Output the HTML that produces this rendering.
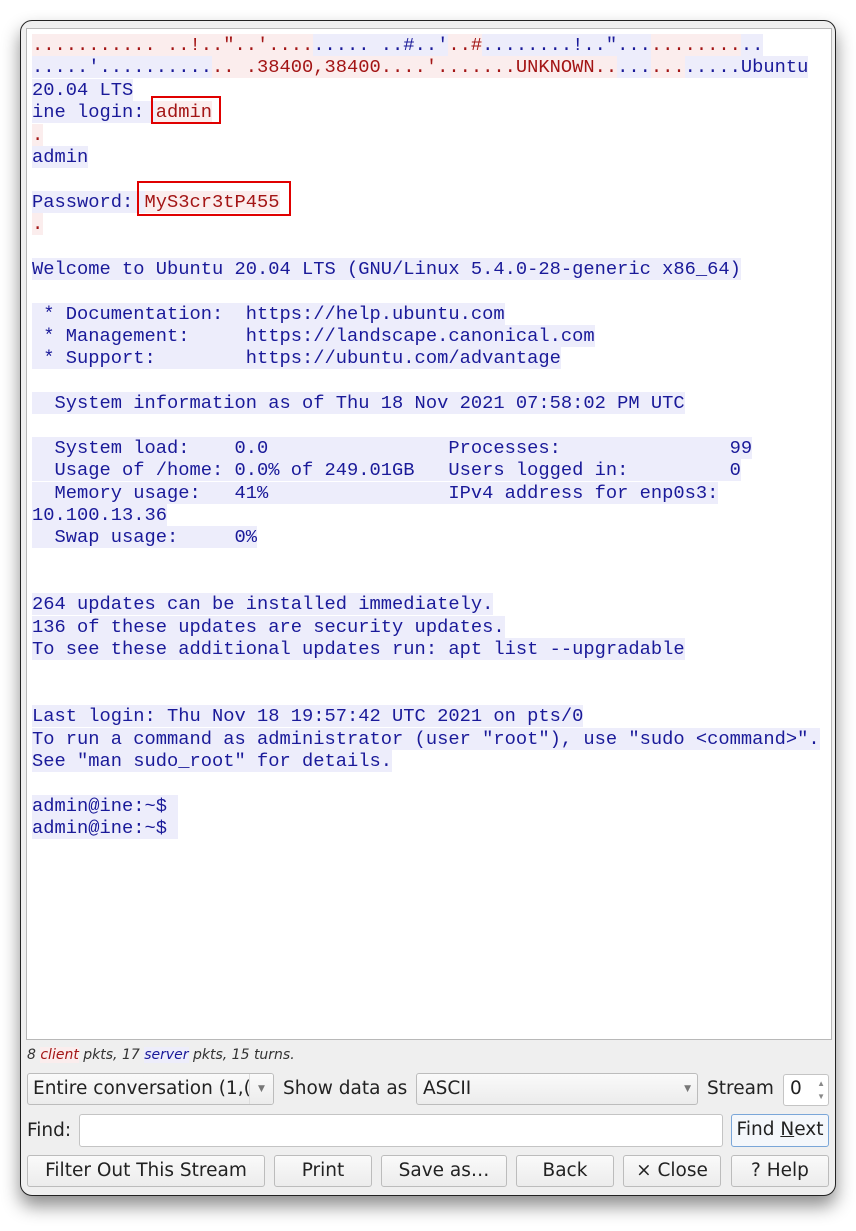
<!DOCTYPE html>
<html><head><meta charset="utf-8">
<style>
*{box-sizing:border-box;margin:0;padding:0}
html,body{width:856px;height:1231px;background:#fff;overflow:hidden}
.win{position:absolute;left:20px;top:20px;width:816px;height:1176px;border:1.5px solid #222;border-radius:12px;background:#efefef;box-shadow:0 10px 18px rgba(0,0,0,.45)}
.ta{position:absolute;left:26px;top:28px;width:806px;height:1012px;background:#fff;border:1px solid #b8b8b8}
pre{position:absolute;left:32px;top:34px;font-family:"Liberation Mono",monospace;font-size:18.75px;line-height:22.37px;white-space:pre;color:#1a1a99}
.c{background:#fbeded;color:#a31515}
.s{background:#ededfb;color:#1a1a99}
.box{position:absolute;border:2px solid #e00000}
.ui{font-family:"DejaVu Sans",sans-serif;font-size:18.5px;color:#222;position:absolute}
.btn{position:absolute;height:32px;border:1px solid #bcbcbc;border-radius:3px;background:linear-gradient(#fafafa,#ececec);font-family:"DejaVu Sans",sans-serif;font-size:18.5px;color:#222;text-align:center;line-height:30px}
.inp{position:absolute;background:#fff;border:1px solid #c4c4c4;border-radius:3px}
</style></head><body>
<div class="win"></div>
<div class="ta"></div>
<pre><span class="c">........... ..!.."..'....</span><span class="s">..... ..#..'</span><span class="c">..#</span><span class="s">........!.."...</span><span class="c">........</span><span class="s">..</span>
<span class="s">.....'..........</span><span class="c">.. .38400,38400....'.......UNKNOWN..</span><span class="s">...</span><span class="c">...</span><span class="s">.....Ubuntu</span>
<span class="s">20.04 LTS</span>
<span class="s">ine login: </span><span class="c">admin</span>
<span class="c">.</span>
<span class="s">admin</span>

<span class="s">Password: </span><span class="c">MyS3cr3tP455</span>
<span class="c">.</span>

<span class="s">Welcome to Ubuntu 20.04 LTS (GNU/Linux 5.4.0-28-generic x86_64)</span>

<span class="s"> * Documentation:  https://help.ubuntu.com</span>
<span class="s"> * Management:     https://landscape.canonical.com</span>
<span class="s"> * Support:        https://ubuntu.com/advantage</span>

<span class="s">  System information as of Thu 18 Nov 2021 07:58:02 PM UTC</span>

<span class="s">  System load:    0.0                Processes:               99</span>
<span class="s">  Usage of /home: 0.0% of 249.01GB   Users logged in:         0</span>
<span class="s">  Memory usage:   41%                IPv4 address for enp0s3:</span>
<span class="s">10.100.13.36</span>
<span class="s">  Swap usage:     0%</span>


<span class="s">264 updates can be installed immediately.</span>
<span class="s">136 of these updates are security updates.</span>
<span class="s">To see these additional updates run: apt list --upgradable</span>


<span class="s">Last login: Thu Nov 18 19:57:42 UTC 2021 on pts/0</span>
<span class="s">To run a command as administrator (user "root"), use "sudo &lt;command&gt;".</span>
<span class="s">See "man sudo_root" for details.</span>

<span class="s">admin@ine:~$ </span>
<span class="s">admin@ine:~$ </span></pre>
<div class="box" style="left:151px;top:96px;width:70px;height:28px"></div>
<div class="box" style="left:137px;top:181px;width:154px;height:35px"></div>

<div class="ui" style="left:27px;top:1047px;font-size:14px;font-style:italic;color:#333">8 <span style="color:#a31515;background:#fbeded">client</span> pkts, 17 <span style="color:#1a1a99;background:#ededfb">server</span> pkts, 15 turns.</div>

<div class="btn" style="left:27px;top:1073px;width:247px;text-align:left;padding-left:5px;overflow:hidden;white-space:nowrap">Entire conversation (1,(<span style="position:absolute;right:0;top:0;width:24px;height:30px;background:linear-gradient(#fafafa,#ececec);border-left:1px solid #ddd;text-align:center;font-size:9px;color:#777">▼</span></div>
<div class="ui" style="left:283px;top:1078px">Show data as</div>
<div class="btn" style="left:416px;top:1073px;width:282px;text-align:left;padding-left:6px">ASCII<span style="position:absolute;right:6px;top:0;font-size:9px;color:#777">▼</span></div>
<div class="ui" style="left:707px;top:1078px">Stream</div>
<div class="inp" style="left:783px;top:1074px;width:46px;height:32px"><span class="ui" style="left:6px;top:3px">0</span><span style="position:absolute;right:3px;top:2px;font-size:8px;color:#888;line-height:13px">▲<br>▼</span></div>

<div class="ui" style="left:27px;top:1120px">Find:</div>
<div class="inp" style="left:79px;top:1114px;width:644px;height:33px"></div>
<div class="btn" style="left:731px;top:1114px;width:98px;height:33px;border-color:#7aa6d8;background:#f4f7fb">Find <u>N</u>ext</div>

<div class="btn" style="left:27px;top:1155px;width:238px">Filter Out This Stream</div>
<div class="btn" style="left:274px;top:1155px;width:98px">Print</div>
<div class="btn" style="left:381px;top:1155px;width:126px">Save as…</div>
<div class="btn" style="left:516px;top:1155px;width:98px">Back</div>
<div class="btn" style="left:623px;top:1155px;width:98px">× Close</div>
<div class="btn" style="left:731px;top:1155px;width:98px">? Help</div>
</body></html>
